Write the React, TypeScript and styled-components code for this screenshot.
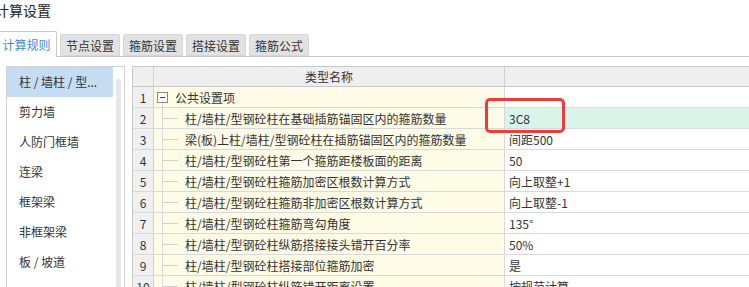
import { Fragment } from "react";
import styled, { createGlobalStyle } from "styled-components";

const GlobalStyle = createGlobalStyle`
  html, body {
    margin: 0;
    padding: 0;
    background: #ffffff;
    overflow: hidden;
  }
  body {
    font-family: "Noto Sans CJK SC", "Noto Sans", sans-serif;
    font-size: 12px;
    color: #333333;
  }
`;

const Page = styled.div`
  width: 749px;
  height: 287px;
  overflow: hidden;
`;

const Title = styled.div`
  height: 31px;
  line-height: 20px;
  font-size: 14px;
  margin-left: -5px;
  color: #222222;
`;

const TabStrip = styled.div`
  display: flex;
  align-items: flex-end;
  gap: 3px;
  height: 25px;
  margin-left: -4px;
  border-bottom: 1px solid #c9c9c9;
`;

const Tab = styled.div<{ $active?: boolean }>`
  box-sizing: border-box;
  width: ${({ $active }) => ($active ? "61px" : "60px")};
  height: ${({ $active }) => ($active ? "26px" : "22px")};
  margin-bottom: ${({ $active }) => ($active ? "-1px" : "0")};
  display: flex;
  align-items: center;
  justify-content: center;
  background: ${({ $active }) => ($active ? "#ffffff" : "#e2e2e2")};
  border: 1px solid ${({ $active }) => ($active ? "#c9c9c9" : "#d6d6d6")};
  border-bottom: ${({ $active }) => ($active ? "none" : "1px solid #d6d6d6")};
  border-radius: 2px 2px 0 0;
  color: ${({ $active }) => ($active ? "#3b8be0" : "#333333")};
  padding-top: ${({ $active }) => ($active ? "0" : "1px")};
`;

const Content = styled.div`
  display: flex;
  align-items: flex-start;
  gap: 7px;
  padding: 9px 0 0 6px;
`;

const SidePanel = styled.div`
  box-sizing: border-box;
  width: 119px;
  height: 240px;
  flex-shrink: 0;
  display: flex;
  border: 1px solid #d2d2d2;
  border-bottom: none;
`;

const NavList = styled.div`
  width: 106px;
  display: flex;
  flex-direction: column;
`;

const NavItem = styled.div<{ $selected?: boolean }>`
  height: 30px;
  line-height: 30px;
  padding-left: 12px;
  white-space: nowrap;
  background: ${({ $selected }) => ($selected ? "#c6dcf2" : "transparent")};
  color: #333333;
`;

const ScrollThumb = styled.div`
  width: 5px;
  margin: 12px 0 0 3px;
  border-radius: 3px 3px 0 0;
  background: #e6e6e6;
`;

const Grid = styled.div`
  width: 640px;
  flex-shrink: 0;
  display: grid;
  grid-template-columns: 21px 351px 1fr;
  grid-auto-rows: min-content;
  border-left: 1px solid #c8c8c8;
  border-top: 1px solid #c8c8c8;
`;

const Cell = styled.div`
  box-sizing: border-box;
  height: 21px;
  display: flex;
  align-items: center;
  border-right: 1px solid #d9d9d9;
  border-bottom: 1px solid #d9d9d9;
  white-space: nowrap;
`;

const HeadCell = styled(Cell)`
  height: 20px;
  justify-content: center;
  background: #efefef;
  border-bottom-color: #c8c8c8;
  border-right-color: #d0d0d0;
`;

const NumCell = styled(Cell)`
  justify-content: center;
  background: #f0f0f0;
  border-right-color: #d0d0d0;
`;

const NameCell = styled(Cell)`
  padding-left: 3px;
  background: #fefbe6;
`;

const ValueCell = styled(Cell)<{ $picked?: boolean }>`
  position: relative;
  padding-left: 4px;
  background: ${({ $picked }) => ($picked ? "#dbf4ea" : "#ffffff")};
`;

const ExpandBox = styled.span`
  position: relative;
  box-sizing: border-box;
  width: 11px;
  height: 11px;
  margin-right: 7px;
  border: 1px solid #8a8a8a;
  background: #ffffff;
  flex-shrink: 0;

  &::before {
    content: "";
    position: absolute;
    left: 2px;
    right: 2px;
    top: 4px;
    height: 1px;
    background: #444444;
  }

  &::after {
    content: "";
    position: absolute;
    left: 4px;
    top: 10px;
    width: 1px;
    height: 5px;
    background: #d0d0d0;
  }
`;

const TreeGuide = styled.span`
  position: relative;
  align-self: stretch;
  width: 28px;
  flex-shrink: 0;

  &::before {
    content: "";
    position: absolute;
    left: 5px;
    top: 0;
    bottom: -1px;
    width: 1px;
    background: #dadada;
  }

  &::after {
    content: "";
    position: absolute;
    left: 5px;
    width: 16px;
    top: 10px;
    height: 1px;
    background: #d2d2d2;
  }
`;

/* red annotation drawn over the picked value */
const Marker = styled.div`
  position: absolute;
  z-index: 2;
  left: -20px;
  top: -10px;
  width: 80px;
  height: 35px;
  box-sizing: border-box;
  border: 3px solid #f03a3a;
  border-radius: 5px;
  pointer-events: none;
`;

const tabs = ["计算规则", "节点设置", "箍筋设置", "搭接设置", "箍筋公式"];

const navItems = ["柱 / 墙柱 / 型...", "剪力墙", "人防门框墙", "连梁", "框架梁", "非框架梁", "板 / 坡道"];

const rows = [
  { name: "柱/墙柱/型钢砼柱在基础插筋锚固区内的箍筋数量", value: "3C8", picked: true },
  { name: "梁(板)上柱/墙柱/型钢砼柱在插筋锚固区内的箍筋数量", value: "间距500" },
  { name: "柱/墙柱/型钢砼柱第一个箍筋距楼板面的距离", value: "50" },
  { name: "柱/墙柱/型钢砼柱箍筋加密区根数计算方式", value: "向上取整+1" },
  { name: "柱/墙柱/型钢砼柱箍筋非加密区根数计算方式", value: "向上取整-1" },
  { name: "柱/墙柱/型钢砼柱箍筋弯勾角度", value: "135°" },
  { name: "柱/墙柱/型钢砼柱纵筋搭接接头错开百分率", value: "50%" },
  { name: "柱/墙柱/型钢砼柱搭接部位箍筋加密", value: "是" },
  { name: "柱/墙柱/型钢砼柱纵筋错开距离设置", value: "按规范计算" },
];

export default function App() {
  return (
    <Page>
      <GlobalStyle />
      <Title>计算设置</Title>
      <TabStrip>
        {tabs.map((t, i) => (
          <Tab key={t} $active={i === 0}>
            {t}
          </Tab>
        ))}
      </TabStrip>
      <Content>
        <SidePanel>
          <NavList>
            {navItems.map((n, i) => (
              <NavItem key={n} $selected={i === 0}>
                {n}
              </NavItem>
            ))}
          </NavList>
          <ScrollThumb />
        </SidePanel>
        <Grid>
          <HeadCell />
          <HeadCell>类型名称</HeadCell>
          <HeadCell />

          <NumCell>1</NumCell>
          <NameCell>
            <ExpandBox />
            公共设置项
          </NameCell>
          <ValueCell />

          {rows.map((r, i) => (
            <Fragment key={i}>
              <NumCell>{i + 2}</NumCell>
              <NameCell>
                <TreeGuide />
                {r.name}
              </NameCell>
              <ValueCell $picked={r.picked}>
                {r.value}
                {r.picked && <Marker />}
              </ValueCell>
            </Fragment>
          ))}
        </Grid>
      </Content>
    </Page>
  );
}
